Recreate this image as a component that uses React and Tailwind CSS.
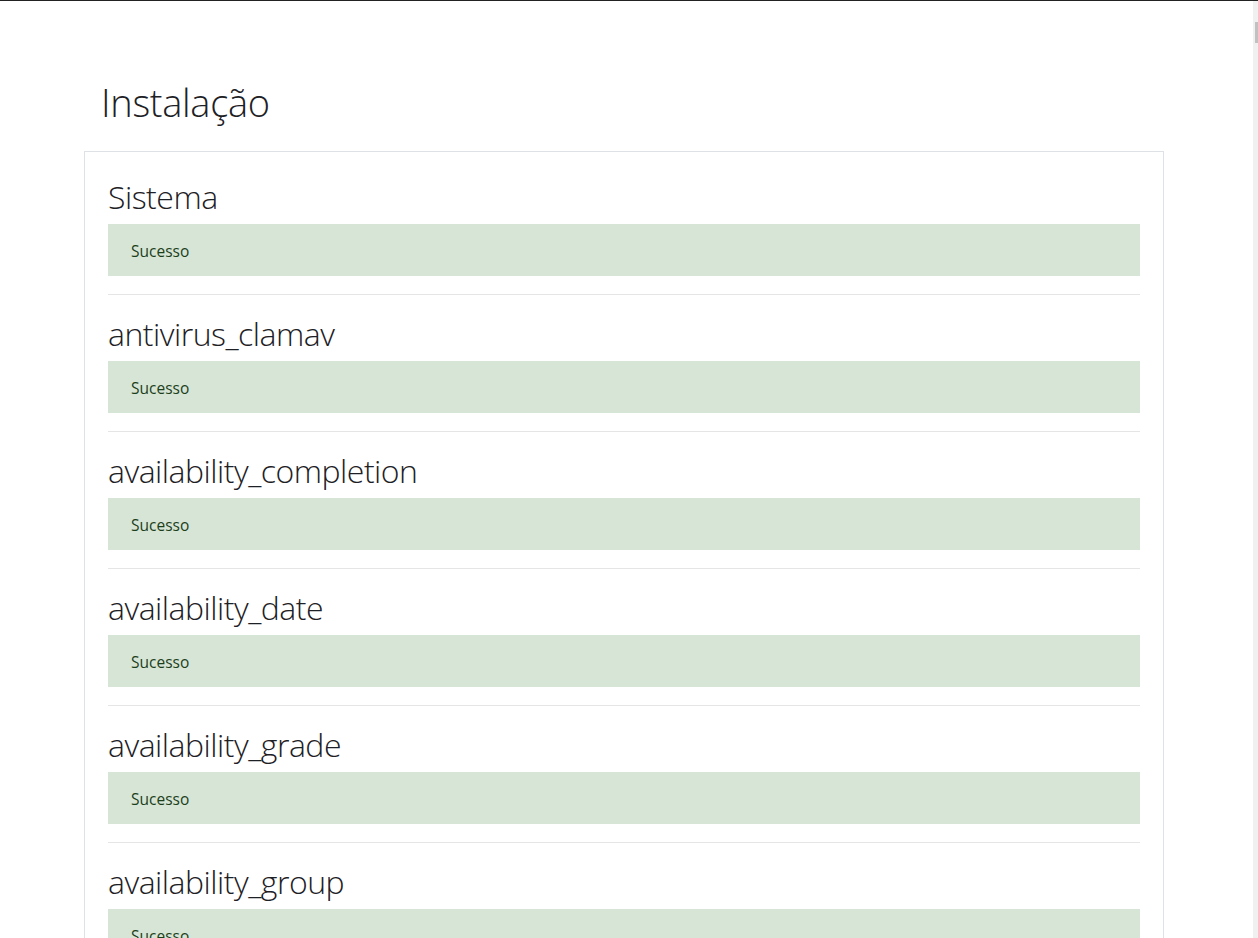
import React from 'react';

const plugins = [
  'Sistema',
  'antivirus_clamav',
  'availability_completion',
  'availability_date',
  'availability_grade',
  'availability_group',
  'availability_grouping',
];

const Section = ({ name, first }) => (
  <div className={first ? 'pt-[23px]' : 'border-t border-[#e5e5e5] pt-[17px]'}>
    <h3 className="text-[32px] leading-[43px] font-light tracking-[-0.5px] text-[#1d2125] mb-[6px]">{name}</h3>
    <div className="bg-[#d7e5d7] text-[#1c3f1a] text-[15.5px] leading-[24px] px-[23px] pt-[15px] pb-[13px] mb-[18px]">
      Sucesso
    </div>
  </div>
);

export default function App() {
  return (
    <div
      className="h-screen overflow-hidden flex bg-white border-t border-[#222]"
      style={{ fontFamily: '"Open Sans", "Noto Sans", sans-serif' }}
    >
      <main className="flex-1 pl-[84px]">
        <div className="w-[1080px]">
          <h2 className="text-[38px] leading-[48px] font-light tracking-[-0.3px] text-[#1d2125] pl-[17px] mt-[77px] mb-[25px]">
            Instalação
          </h2>
          <div className="border border-[#dee2e6] px-[23px]">
            {plugins.map((p, i) => (
              <Section key={p} name={p} first={i === 0} />
            ))}
          </div>
        </div>
      </main>
      <div className="w-[5px] bg-[#f0f0f0] relative">
        <div className="absolute right-0 top-[21px] w-[3px] h-[21px] bg-[#c1c1c1]" />
      </div>
    </div>
  );
}
